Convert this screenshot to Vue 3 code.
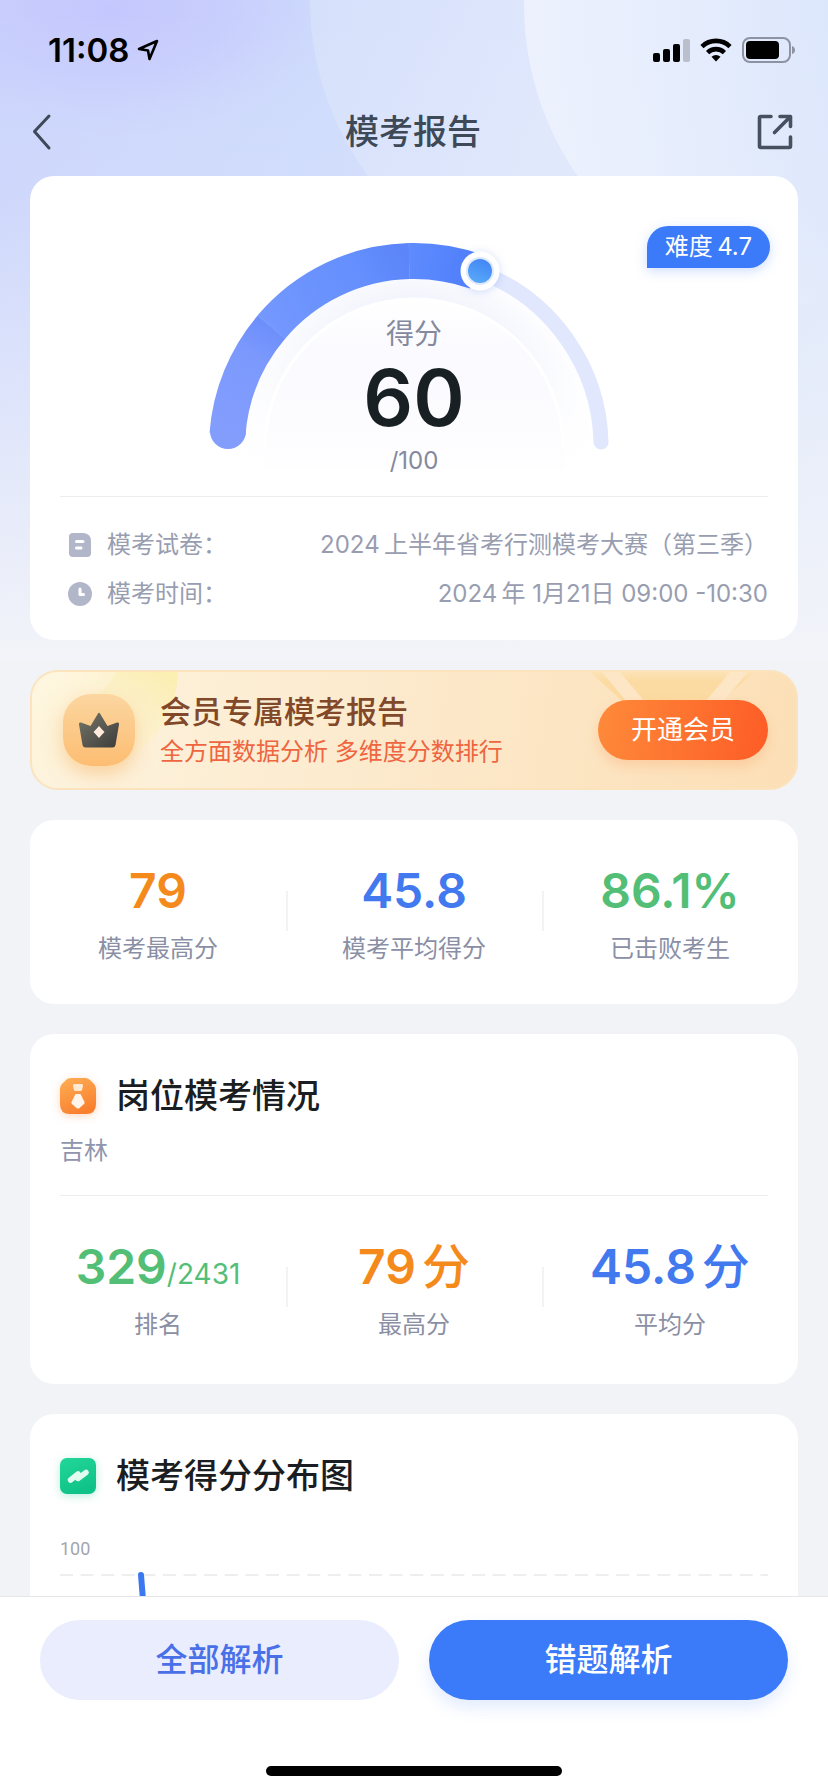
<script setup>
const infoRows = [
  { icon: 'paper', label: '模考试卷：', value: '2024\u2009上半年省考行测模考大赛（第三季）' },
  { icon: 'clock', label: '模考时间：', value: '2024\u2009年 1月21日 09:00 -10:30' }
]

const overview = [
  { value: '79', label: '模考最高分', tone: 'orange' },
  { value: '45.8', label: '模考平均得分', tone: 'blue' },
  { value: '86.1%', label: '已击败考生', tone: 'green' }
]

const position = [
  { value: '329', total: '/2431', label: '排名', tone: 'green' },
  { value: '79', unit: '分', label: '最高分', tone: 'orange' },
  { value: '45.8', unit: '分', label: '平均分', tone: 'blue' }
]
</script>

<template>
  <div class="page">
    <svg class="backdrop" viewBox="0 0 828 660" preserveAspectRatio="none" aria-hidden="true">
      <defs>
        <linearGradient id="bgBase" x1="0" y1="0" x2="1" y2="0">
          <stop offset="0" stop-color="#cbd5fc" />
          <stop offset="0.45" stop-color="#cfdcfc" />
          <stop offset="1" stop-color="#dce6fa" />
        </linearGradient>
        <radialGradient id="bgViolet">
          <stop offset="0" stop-color="#c4c7fd" />
          <stop offset="0.5" stop-color="#c6cafd" stop-opacity="0.7" />
          <stop offset="1" stop-color="#c8d0fd" stop-opacity="0" />
        </radialGradient>
        <linearGradient id="bgBubbleA" gradientUnits="userSpaceOnUse" x1="310" y1="0" x2="560" y2="40">
          <stop offset="0" stop-color="#d5e0fb" />
          <stop offset="1" stop-color="#dfe7fc" />
        </linearGradient>
        <linearGradient id="bgBubbleB" gradientUnits="userSpaceOnUse" x1="530" y1="60" x2="828" y2="60">
          <stop offset="0" stop-color="#ecf1fd" />
          <stop offset="0.4" stop-color="#e7eefd" />
          <stop offset="1" stop-color="#dde7fc" />
        </linearGradient>
        <linearGradient id="bgFade" x1="0" y1="0" x2="0" y2="1">
          <stop offset="0" stop-color="#f2f4f9" stop-opacity="0" />
          <stop offset="0.3" stop-color="#f2f4f9" stop-opacity="0.1" />
          <stop offset="1" stop-color="#f2f4f9" />
        </linearGradient>
      </defs>
      <rect width="828" height="660" fill="url(#bgBase)" />
      <ellipse cx="110" cy="10" rx="240" ry="130" fill="url(#bgViolet)" />
      <circle cx="606" cy="0" r="296" fill="url(#bgBubbleA)" />
      <circle cx="824" cy="5" r="300" fill="url(#bgBubbleB)" />
      <rect width="828" height="660" fill="url(#bgFade)" />
    </svg>

    <div class="statusbar">
      <div class="clock">
        <span>11:08</span>
        <svg width="22" height="22" viewBox="0 0 22 22" aria-hidden="true">
          <path d="M20 2 12.5 20 11 11.5 2 10Z" fill="none" stroke="#000" stroke-width="2.6" stroke-linejoin="round" />
        </svg>
      </div>
      <div class="signals">
        <svg width="37" height="24" viewBox="0 0 37 24" aria-hidden="true">
          <rect x="0" y="15" width="7" height="9" rx="2" />
          <rect x="10" y="11" width="7" height="13" rx="2" />
          <rect x="20" y="6" width="7" height="18" rx="2" />
          <rect x="30" y="1" width="7" height="23" rx="2" fill="#b9bfcd" />
        </svg>
        <svg width="32" height="24" viewBox="0 0 32 24" aria-hidden="true">
          <g fill="none" stroke="#000" stroke-width="4.6">
            <path d="M2 8.6A20 20 0 0 1 30 8.6" />
            <path d="M7.600 14.600A12 12 0 0 1 24.400 14.600" />
          </g>
          <path d="M11.500 18.800A6.500 6.500 0 0 1 20.500 18.800L16 23.500Z" />
        </svg>
        <svg width="54" height="26" viewBox="0 0 54 26" aria-hidden="true">
          <rect x="1" y="1" width="47" height="24" rx="7" fill="none" stroke="#8d93a3" stroke-width="2" />
          <rect x="4" y="4" width="33" height="18" rx="4" />
          <path d="M50 9Q53 10 53 13T50 17Z" fill="#8d93a3" />
        </svg>
      </div>
    </div>

    <header class="nav">
      <button class="icon-button" type="button" aria-label="返回">
        <svg width="20" height="38" viewBox="0 0 20 38" aria-hidden="true">
          <path d="M17 3 2.500 18.500 17 35" fill="none" stroke="#3d4957" stroke-width="3" stroke-linecap="round" stroke-linejoin="round" />
        </svg>
      </button>
      <h1>模考报告</h1>
      <button class="icon-button" type="button" aria-label="分享">
        <svg width="38" height="38" viewBox="0 0 38 38" aria-hidden="true">
          <g fill="none" stroke="#46505e" stroke-width="3.600" stroke-linecap="round" stroke-linejoin="round">
            <path d="M15 3.500H5Q3.500 3.500 3.500 5V33Q3.500 34.500 5 34.500H33Q34.500 34.500 34.500 33V24" />
            <path d="M24 3.500H34.500V13.500" />
            <path d="M33.500 4.500 18.500 19.500" />
          </g>
        </svg>
      </button>
    </header>

    <main class="content">
      <section class="card score-card">
        <span class="difficulty">难度&#8201;4.7</span>
        <div class="gauge">
          <svg class="gauge-art" width="420" height="320" viewBox="0 0 420 320" aria-hidden="true">
            <defs>
              <radialGradient id="ringShade" gradientUnits="userSpaceOnUse" cx="210" cy="272" r="184">
                <stop offset="0.8" stop-color="#f0f2fc" />
                <stop offset="0.92" stop-color="#f8f9fe" />
                <stop offset="1" stop-color="#ffffff" />
              </radialGradient>
              <linearGradient id="ringFade" x1="0" y1="0" x2="0" y2="1">
                <stop offset="0" stop-color="#ffffff" stop-opacity="0" />
                <stop offset="0.75" stop-color="#ffffff" stop-opacity="0.85" />
                <stop offset="1" stop-color="#ffffff" />
              </linearGradient>
              <linearGradient id="innerDisc" x1="0" y1="0" x2="0" y2="1">
                <stop offset="0" stop-color="#ffffff" />
                <stop offset="0.35" stop-color="#fafaff" />
                <stop offset="1" stop-color="#fefeff" />
              </linearGradient>
              <linearGradient id="arcA" gradientUnits="userSpaceOnUse" x1="24" y1="255" x2="82" y2="160">
                <stop offset="0" stop-color="#839dfd" />
                <stop offset="0.7" stop-color="#7b99fd" />
                <stop offset="1" stop-color="#6d8ffb" />
              </linearGradient>
              <linearGradient id="arcB" gradientUnits="userSpaceOnUse" x1="60" y1="160" x2="205" y2="85">
                <stop offset="0" stop-color="#7598fe" />
                <stop offset="0.7" stop-color="#648ffd" />
                <stop offset="1" stop-color="#5b85f9" />
              </linearGradient>
              <linearGradient id="arcC" gradientUnits="userSpaceOnUse" x1="205" y1="85" x2="276" y2="95">
                <stop offset="0" stop-color="#5e8bfd" />
                <stop offset="1" stop-color="#4d7dfb" />
              </linearGradient>
              <linearGradient id="dot" x1="0.700" y1="0" x2="0.300" y2="1">
                <stop offset="0" stop-color="#4286f6" />
                <stop offset="1" stop-color="#58a9f8" />
              </linearGradient>
              <filter id="knobShadow" x="-50%" y="-50%" width="200%" height="200%">
                <feDropShadow dx="0" dy="1" stdDeviation="4" flood-color="#5a7df0" flood-opacity="0.28" />
              </filter>
            </defs>
            <path d="M26 294V272A184 184 0 0 1 394 272V294Z" fill="url(#ringShade)" />
            <path d="M26 296V272A184 184 0 0 1 394 272V296Z" fill="url(#ringFade)" />
            <path d="M60 294V272A150 150 0 0 1 360 272V294Z" fill="url(#innerDisc)" />
            <path d="M61 272A149 149 0 0 1 359 272" fill="none" stroke="#ffffff" stroke-width="3" />
            <path d="M276 96A187 187 0 0 1 397 266" fill="none" stroke="#e1e7fd" stroke-width="15" stroke-linecap="round" />
            <circle cx="24" cy="255" r="18" fill="#839dfd" />
            <path d="M23.500 258A187 187 0 0 1 67.600 150.800" fill="none" stroke="url(#arcA)" stroke-width="36" />
            <path d="M67.400 151A187 187 0 0 1 205.300 85" fill="none" stroke="url(#arcB)" stroke-width="36" />
            <path d="M205 85A187 187 0 0 1 272 95.500" fill="none" stroke="url(#arcC)" stroke-width="36" />
            <circle cx="276" cy="95" r="19.500" fill="#ffffff" filter="url(#knobShadow)" />
            <circle cx="276" cy="95" r="14" fill="#dfe8fd" />
            <circle cx="276" cy="95" r="12" fill="url(#dot)" />
          </svg>
          <div class="gauge-text">
            <span class="gauge-label">得分</span>
            <strong class="gauge-score">60</strong>
            <span class="gauge-total">/100</span>
          </div>
        </div>
        <dl class="info">
          <div v-for="row in infoRows" :key="row.label" class="info-row">
            <dt>
              <svg v-if="row.icon === 'paper'" width="24" height="24" viewBox="0 0 24 24" aria-hidden="true">
                <path d="M5 0H16Q23 1 23 8V20Q23 24 19 24H5Q1 24 1 20V4Q1 0 5 0Z" fill="#b2b6c9" />
                <path d="M8.500 8.500H15M8.500 15H13" stroke="#fff" stroke-width="3" stroke-linecap="round" />
              </svg>
              <svg v-else width="24" height="24" viewBox="0 0 24 24" aria-hidden="true">
                <circle cx="12" cy="12" r="12" fill="#b2b6c9" />
                <path d="M12 7V12.500H15.500" fill="none" stroke="#fff" stroke-width="3" stroke-linecap="round" stroke-linejoin="round" />
              </svg>
              {{ row.label }}
            </dt>
            <dd>{{ row.value }}</dd>
          </div>
        </dl>
      </section>

      <section class="banner">
        <svg class="banner-left" width="170" height="120" viewBox="0 0 170 120" aria-hidden="true">
          <defs>
            <linearGradient id="glow" x1="1" y1="0" x2="0" y2="1">
              <stop offset="0" stop-color="#fbeeae" />
              <stop offset="0.700" stop-color="#fdf3d2" stop-opacity="0.300" />
            </linearGradient>
            <linearGradient id="sheen" x1="0" y1="0" x2="1" y2="1">
              <stop offset="0" stop-color="#fff7e4" />
              <stop offset="1" stop-color="#fdf3d6" stop-opacity="0.200" />
            </linearGradient>
          </defs>
          <path d="M0 0H146Q144 60 84 96L0 96Z" fill="url(#glow)" />
          <path d="M0 0H84Q62 42 0 50Z" fill="url(#sheen)" />
        </svg>
        <svg class="banner-right" width="230" height="120" viewBox="0 0 230 120" aria-hidden="true">
          <defs>
            <linearGradient id="fan" x1="0" y1="0" x2="0" y2="1">
              <stop offset="0" stop-color="#fce2b6" />
              <stop offset="0.260" stop-color="#fbdba2" />
            </linearGradient>
          </defs>
          <path d="M24 0H188L148 36H64Z" fill="url(#fan)" />
          <path d="M36 0H54L84 36H66Z" fill="#fde6c6" />
          <path d="M182 0H164L134 36H152Z" fill="#fde6c6" />
        </svg>
        <div class="crown">
          <svg width="42" height="36" viewBox="0 0 42 36" aria-hidden="true">
            <defs>
              <linearGradient id="crownFill" x1="0" y1="0" x2="1" y2="1">
                <stop offset="0" stop-color="#77766a" />
                <stop offset="1" stop-color="#3c3c3a" />
              </linearGradient>
            </defs>
            <path d="M20 1.500Q21 0 22 1.500L29.500 14 39 10.500Q41.500 10 41 12.500L37.500 33Q37 35.500 34.500 35.500H7.500Q5 35.500 4.500 33L1 12.500Q.5 10 3 10.500L12.500 14Z" fill="url(#crownFill)" />
            <path d="M21 14Q24 17.500 26.500 20 24 22.500 21 26 18 22.500 15.500 20 18 17.500 21 14Z" fill="#ffeadb" />
          </svg>
        </div>
        <div class="banner-text">
          <h2>会员专属模考报告</h2>
          <p>全方面数据分析 多维度分数排行</p>
        </div>
        <button class="open-button" type="button">开通会员</button>
      </section>

      <section class="card stats overview">
        <div v-for="item in overview" :key="item.label" class="stat">
          <strong :class="['stat-value', item.tone]">{{ item.value }}</strong>
          <span class="stat-label">{{ item.label }}</span>
        </div>
      </section>

      <section class="card">
        <div class="card-head">
          <svg class="badge-orange" width="36" height="36" viewBox="0 0 36 36" aria-hidden="true">
            <defs>
              <linearGradient id="badgeA" x1="0.300" y1="0" x2="0.700" y2="1">
                <stop offset="0" stop-color="#feaa52" />
                <stop offset="1" stop-color="#f97d2c" />
              </linearGradient>
            </defs>
            <path d="M11 0H25Q28 0 30 2L34 6Q36 8 36 11V26Q36 36 26 36H10Q0 36 0 26V11Q0 8 2 6L6 2Q8 0 11 0Z" fill="url(#badgeA)" />
            <path d="M14.500 6H21.500Q23.500 6 23 8L22 12Q21.700 13 20.500 13H15.500Q14.300 13 14 12L13 8Q12.500 6 14.500 6Z" fill="#ffe9d3" />
            <path d="M15.500 16H20.500L24.500 24Q25 25 24 26L19.500 30Q18 31 16.500 30L12 26Q11 25 11.500 24Z" fill="#fff5ea" />
          </svg>
          <h2>岗位模考情况</h2>
        </div>
        <p class="region">吉林</p>
        <div class="stats">
          <div v-for="item in position" :key="item.label" class="stat">
            <strong :class="['stat-value', item.tone]">{{ item.value }}<small v-if="item.total">{{ item.total }}</small><span v-if="item.unit" class="unit">{{ item.unit }}</span></strong>
            <span class="stat-label">{{ item.label }}</span>
          </div>
        </div>
      </section>

      <section class="card chart-card">
        <div class="card-head">
          <svg class="badge-green" width="36" height="36" viewBox="0 0 36 36" aria-hidden="true">
            <defs>
              <linearGradient id="badgeB" x1="0" y1="0" x2="0.400" y2="1">
                <stop offset="0" stop-color="#23d79a" />
                <stop offset="1" stop-color="#0fc287" />
              </linearGradient>
            </defs>
            <rect width="36" height="36" rx="7" fill="url(#badgeB)" />
            <path d="M10.500 22 18 16V20.500L26 14.500" fill="none" stroke="#e2fbf0" stroke-width="5.500" stroke-linecap="round" stroke-linejoin="round" />
          </svg>
          <h2>模考得分分布图</h2>
        </div>
        <div class="chart">
          <span class="axis-label">100</span>
          <svg width="100%" height="180" aria-hidden="true">
            <line x1="0" y1="5" x2="100%" y2="5" stroke="#dcdee2" stroke-width="1" stroke-dasharray="13 7.600" />
            <path d="M81 5 83 30 90 170" fill="none" stroke="#3c78f0" stroke-width="6" stroke-linecap="round" />
          </svg>
        </div>
      </section>
    </main>

    <footer class="actions">
      <div class="action-row">
        <button class="action soft" type="button">全部解析</button>
        <button class="action solid" type="button">错题解析</button>
      </div>
      <div class="home-indicator"></div>
    </footer>
  </div>
</template>

<style>
body {
  margin: 0;
  background: #f1f3f8;
}
</style>

<style scoped>
.page {
  position: relative;
  display: flex;
  flex-direction: column;
  height: 100vh;
  overflow: hidden;
  background: #f1f3f7;
  color: #1a1d21;
  font-family: Inter, "Noto Sans CJK SC", sans-serif;
  font-size: 24px;
  line-height: 32px;
}

h1,
h2,
p,
dl,
dd {
  margin: 0;
}

button {
  padding: 0;
  border: 0;
  background: none;
  font-family: inherit;
  cursor: pointer;
}

svg {
  display: block;
  flex: none;
}

.backdrop {
  position: absolute;
  top: 0;
  left: 0;
  width: 100%;
  height: 660px;
}

.statusbar,
.nav,
.content,
.actions {
  position: relative;
}

.statusbar {
  display: flex;
  align-items: center;
  justify-content: space-between;
  height: 76px;
  padding: 12px 32px 0 48px;
}

.clock {
  display: flex;
  align-items: center;
  gap: 8px;
  color: #000;
  font-size: 33px;
  font-weight: 600;
}

.signals {
  display: flex;
  align-items: center;
  gap: 10px;
}

.nav {
  display: flex;
  align-items: center;
  justify-content: space-between;
  height: 88px;
  padding: 0 34px 0 32px;
}

.nav h1 {
  color: #3d4957;
  font-size: 34px;
  font-weight: 500;
  line-height: 48px;
}

.icon-button {
  display: flex;
  width: 38px;
}

.icon-button:last-child {
  justify-content: flex-end;
}

.content {
  display: flex;
  flex: 1;
  flex-direction: column;
  gap: 30px;
  min-height: 0;
  padding: 0 30px;
  overflow-y: auto;
  scrollbar-width: none;
}

.card {
  position: relative;
  flex: none;
  border-radius: 24px;
  background: #fff;
}

.difficulty {
  position: absolute;
  top: 50px;
  right: 28px;
  padding: 0 18px;
  border-radius: 21px 21px 21px 0;
  background: #3b7af8;
  box-shadow: 0 3px 12px rgba(59, 122, 248, 0.25);
  color: #fff;
  line-height: 42px;
}

.gauge {
  position: relative;
  display: flex;
  justify-content: center;
  height: 320px;
}

.gauge-text {
  position: absolute;
  inset: 138px 0 0;
  display: flex;
  flex-direction: column;
  align-items: center;
  color: #84899d;
}

.gauge-label {
  font-size: 28px;
  line-height: 40px;
}

.gauge-score {
  margin: 4px 0 7px;
  color: #182024;
  font-size: 78px;
  font-weight: 600;
  line-height: 80px;
}

.info {
  display: flex;
  flex-direction: column;
  gap: 17px;
  margin: 0 30px;
  padding: 32px 0 30px;
  border-top: 1px solid #eceef2;
  color: #989db0;
}

.info-row {
  display: flex;
  align-items: center;
  justify-content: space-between;
}

.info-row dt {
  display: flex;
  align-items: center;
  gap: 15px;
  padding-left: 8px;
}

.banner {
  position: relative;
  display: flex;
  flex: none;
  align-items: center;
  gap: 25px;
  height: 116px;
  padding: 0 28px 0 31px;
  overflow: hidden;
  border: 2px solid #fbe3bd;
  border-radius: 28px;
  background: linear-gradient(100deg, #fdf4df, #fceacd 45%, #fcdfb6);
}

.banner-left,
.banner-right {
  position: absolute;
  top: 0;
}

.banner-left {
  left: 0;
}

.banner-right {
  right: 0;
}

.crown {
  position: relative;
  display: flex;
  align-items: center;
  justify-content: center;
  width: 72px;
  height: 72px;
  border-radius: 28px;
  background: linear-gradient(#fcd6a0, #fcbd72);
  box-shadow: 0 8px 18px rgba(250, 180, 100, 0.5);
}

.banner-text {
  position: relative;
  flex: 1;
}

.banner-text h2 {
  color: #81482a;
  font-size: 31px;
  font-weight: 500;
  line-height: 44px;
}

.banner-text p {
  color: #ee6540;
  font-size: 24px;
  line-height: 36px;
}

.open-button {
  position: relative;
  width: 170px;
  border-radius: 30px;
  background: linear-gradient(100deg, #fe8a3a, #fd5c26);
  box-shadow: 0 6px 12px rgba(250, 130, 60, 0.22);
  color: #fff;
  font-size: 26px;
  line-height: 60px;
}

.stats {
  display: grid;
  grid-template-columns: repeat(3, 1fr);
}

.overview {
  padding: 43px 0 39px;
}

.stat {
  display: flex;
  flex-direction: column;
  align-items: center;
  gap: 14px;
}

.stat + .stat {
  background: linear-gradient(#f2f3f5, #f2f3f5) left 28px / 2px 40px no-repeat;
}

.stat-value {
  font-size: 48px;
  font-weight: 600;
  line-height: 56px;
}

.stat-value small {
  font-size: 28px;
  font-weight: 400;
  line-height: 28px;
}

.unit {
  margin-left: 6px;
  font-weight: 500;
}

.stat-label {
  color: #8a8fa5;
}

.orange {
  color: #f58a1c;
}

.blue {
  color: #4279ee;
}

.green {
  color: #52be76;
}

.card-head {
  display: flex;
  align-items: center;
  gap: 20px;
  padding: 38px 30px 0;
}

.card-head h2 {
  font-size: 34px;
  font-weight: 500;
  line-height: 48px;
}

.badge-orange {
  filter: drop-shadow(0 2px 4px rgba(250, 130, 50, 0.3));
}

.badge-green {
  filter: drop-shadow(0 2px 4px rgba(20, 200, 140, 0.3));
}

.region {
  margin: 0 30px;
  padding: 15px 0 28px;
  border-bottom: 1px solid #eceef2;
  color: #9094ad;
}

.region + .stats {
  padding: 43px 0;
}

.chart {
  padding: 37px 30px 0;
}

.axis-label {
  display: block;
  padding: 0 0 9px;
  color: #a3a6ae;
  font-family: Roboto, sans-serif;
  font-size: 18px;
  line-height: 24px;
}

.actions {
  flex: none;
  border-top: 1px solid #e4e6ea;
  background: #fff;
}

.action-row {
  display: flex;
  gap: 30px;
  padding: 23px 40px 66px;
}

.action {
  flex: 1;
  border-radius: 40px;
  font-size: 32px;
  font-weight: 500;
  line-height: 80px;
}

.soft {
  background: #e9edfd;
  color: #4a70e8;
}

.solid {
  background: #3b7af8;
  box-shadow: 0 8px 16px rgba(59, 122, 248, 0.14);
  color: #fff;
}

.home-indicator {
  width: 296px;
  height: 10px;
  margin: 0 auto 16px;
  border-radius: 5px;
  background: #000;
}
</style>
